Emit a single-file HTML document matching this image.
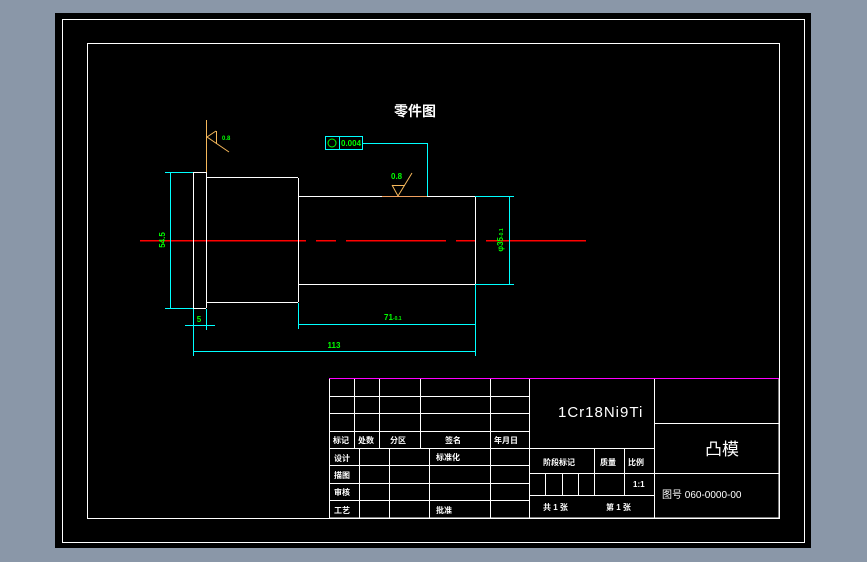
<html><head><style>body{margin:0;width:867px;height:562px;background:#8a97a8;overflow:hidden}svg line,svg rect,svg polyline{shape-rendering:crispEdges}</style></head><body>
<svg width="867" height="562" style="position:absolute;left:0;top:0" font-family="Liberation Sans, Noto Sans CJK SC, sans-serif">
<rect x="55" y="13" width="756" height="535" fill="#000"/>
<rect x="62.5" y="19.5" width="742" height="523" fill="none" stroke="#fff" stroke-width="1"/>
<rect x="87.5" y="43.5" width="692" height="475" fill="none" stroke="#fff" stroke-width="1"/>
<text x="415" y="116" fill="#fff" font-size="14" font-weight="bold" text-anchor="middle">零件图</text>
<g stroke="#f00" stroke-width="1.5">
<line x1="140" y1="240.5" x2="306" y2="240.5"/><line x1="316" y1="240.5" x2="336" y2="240.5"/><line x1="346" y1="240.5" x2="446" y2="240.5"/><line x1="456" y1="240.5" x2="476" y2="240.5"/><line x1="486" y1="240.5" x2="586" y2="240.5"/>
</g>
<g stroke="#fff" stroke-width="1" fill="none">
<line x1="193" y1="172.5" x2="206" y2="172.5"/><line x1="193.5" y1="172" x2="193.5" y2="308"/><line x1="206.5" y1="172" x2="206.5" y2="308"/><line x1="193" y1="308.5" x2="206" y2="308.5"/>
<line x1="206" y1="177.5" x2="298" y2="177.5"/><line x1="206" y1="302.5" x2="298" y2="302.5"/><line x1="298.5" y1="178" x2="298.5" y2="302"/>
<line x1="298" y1="196.5" x2="475" y2="196.5"/><line x1="298" y1="284.5" x2="475" y2="284.5"/><line x1="475.5" y1="196" x2="475.5" y2="284"/>
</g>
<g stroke="#0ff" stroke-width="1" fill="none">
<line x1="165" y1="172.5" x2="193" y2="172.5"/><line x1="165" y1="308.5" x2="193" y2="308.5"/><line x1="170.5" y1="172" x2="170.5" y2="308"/>
<line x1="475" y1="196.5" x2="514" y2="196.5"/><line x1="475" y1="284.5" x2="514" y2="284.5"/><line x1="509.5" y1="196" x2="509.5" y2="284"/>
<line x1="193.5" y1="309" x2="193.5" y2="356"/><line x1="206.5" y1="309" x2="206.5" y2="330"/><line x1="185" y1="325.5" x2="215" y2="325.5"/>
<line x1="298.5" y1="303" x2="298.5" y2="329"/><line x1="298" y1="324.5" x2="475" y2="324.5"/><line x1="475.5" y1="285" x2="475.5" y2="356"/>
<line x1="193" y1="351.5" x2="475" y2="351.5"/>
<rect x="325.5" y="136.5" width="37" height="13"/><line x1="339.5" y1="136" x2="339.5" y2="150"/>
<polyline points="363,143.5 427.5,143.5 427.5,196"/>
</g>
<circle cx="332" cy="143" r="4" stroke="#0f0" fill="none"/>
<g fill="#0f0" font-size="8" font-weight="bold">
<text x="341" y="146">0.004</text>
<text x="199" y="322" text-anchor="middle">5</text>
<text x="384" y="320">71<tspan font-size="5">-0.1</tspan></text>
<text x="334" y="348" text-anchor="middle">113</text>
<text x="391" y="179">0.8</text>
<text transform="translate(165,240) rotate(-90)" text-anchor="middle">54.5</text>
<text transform="translate(503,240) rotate(-90)" text-anchor="middle">φ35<tspan font-size="5">-0.1</tspan></text>
<text x="222" y="140" font-size="6">0.8</text>
</g>
<g stroke="#f5b75a" stroke-width="1" fill="none">
<line x1="206.5" y1="120" x2="206.5" y2="172"/><polyline points="216,131 207,137 229,152" style="shape-rendering:auto"/><line x1="216.5" y1="131" x2="216.5" y2="144"/>
<polyline points="392,185.5 405,185.5"/><polyline points="392,185 398,196 412,173" style="shape-rendering:auto"/>
<line x1="382" y1="196.5" x2="427" y2="196.5" stroke="#f0a060"/>
</g>
<g stroke="#fff" stroke-width="1" fill="none">
<rect x="329.5" y="378.5" width="449.5" height="139.5"/>
<line x1="529.5" y1="378" x2="529.5" y2="518"/><line x1="654.5" y1="378" x2="654.5" y2="518"/>
<line x1="329" y1="396.5" x2="529" y2="396.5"/><line x1="329" y1="413.5" x2="529" y2="413.5"/><line x1="329" y1="431.5" x2="529" y2="431.5"/><line x1="329" y1="448.5" x2="529" y2="448.5"/>
<line x1="329" y1="465.5" x2="529" y2="465.5"/><line x1="329" y1="483.5" x2="529" y2="483.5"/><line x1="329" y1="500.5" x2="529" y2="500.5"/>
<line x1="354.5" y1="378" x2="354.5" y2="448"/><line x1="379.5" y1="378" x2="379.5" y2="448"/><line x1="420.5" y1="378" x2="420.5" y2="448"/><line x1="490.5" y1="378" x2="490.5" y2="518"/>
<line x1="359.5" y1="448" x2="359.5" y2="518"/><line x1="389.5" y1="448" x2="389.5" y2="518"/><line x1="429.5" y1="448" x2="429.5" y2="518"/>
<line x1="529" y1="448.5" x2="654" y2="448.5"/><line x1="529" y1="473.5" x2="654" y2="473.5"/><line x1="529" y1="495.5" x2="654" y2="495.5"/>
<line x1="594.5" y1="448" x2="594.5" y2="495"/><line x1="624.5" y1="448" x2="624.5" y2="495"/>
<line x1="545.5" y1="473" x2="545.5" y2="495"/><line x1="562.5" y1="473" x2="562.5" y2="495"/><line x1="578.5" y1="473" x2="578.5" y2="495"/>
<line x1="654" y1="423.5" x2="779" y2="423.5"/><line x1="654" y1="473.5" x2="779" y2="473.5"/>
</g>
<line x1="329" y1="378.5" x2="779" y2="378.5" stroke="#f0f" stroke-width="1"/>
<g fill="#fff" font-size="8" font-weight="bold">
<text x="333" y="443">标记</text><text x="358" y="443">处数</text><text x="390" y="443">分区</text><text x="445" y="443">签名</text><text x="494" y="443">年月日</text>
<text x="334" y="461">设计</text><text x="436" y="460">标准化</text><text x="334" y="478">描图</text><text x="334" y="495">审核</text><text x="334" y="513">工艺</text><text x="436" y="513">批准</text>
<text x="543" y="465">阶段标记</text><text x="600" y="465">质量</text><text x="628" y="465">比例</text>
<text x="633" y="487">1:1</text>
<text x="543" y="510">共 1  张</text><text x="606" y="510">第 1 张</text>
<text x="662" y="498" font-weight="normal" font-size="10">图号 060-0000-00</text>
</g>
<text x="558" y="417" fill="#fff" font-size="15" letter-spacing="1">1Cr18Ni9Ti</text>
<text x="705" y="455" fill="#fff" font-size="17">凸模</text>
</svg></body></html>
